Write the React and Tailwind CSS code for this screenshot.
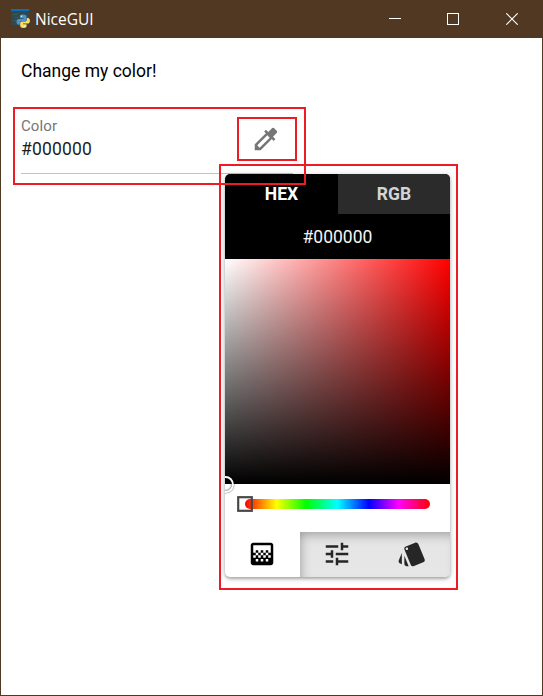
import React from "react";
import { MdColorize, MdGradient, MdTune, MdStyle } from "react-icons/md";

function AppIcon() {
  return (
    <svg className="block" width="20" height="20" viewBox="0 0 20 20">
      <rect x="0" y="0" width="18" height="16" fill="#304950" />
      <rect x="0" y="0" width="18" height="2" fill="#0b6ebd" />
      <path d="M2 5.5h5M4 8.5h3M2 11.5h3" stroke="#36684c" strokeWidth="0.8" />
      <path d="M11.8 5.5c-2.4 0-3 .9-3 2.2v1.5h3.6v.7H7.6c-1.3 0-2.1 1.1-2.1 2.9s.8 3 2.1 3h1.2v-1.7c0-1.2 1-2.1 2.2-2.1h2.7c1 0 1.8-.8 1.8-1.8V7.7c0-1.4-1.5-2.2-3.7-2.2z" fill="#4d93cb" />
      <path d="M12.6 19c2.4 0 3-.9 3-2.2v-1.5H12v-.7h4.8c1.3 0 2.1-1.1 2.1-2.9s-.8-2.8-2.1-2.8h-.9v1.5c0 1.2-1 2.1-2.2 2.1H11c-1 0-1.8.8-1.8 1.8v2.5c0 1.4 1.4 2.2 3.4 2.2z" fill="#ffdc63" />
      <circle cx="10.5" cy="7.2" r=".7" fill="#fff" />
      <circle cx="13.8" cy="17.3" r=".7" fill="#fff" />
    </svg>
  );
}

function TitleBar() {
  return (
    <header className="flex h-[38px] items-start bg-[#513823] text-white">
      <div className="pt-[9px] pl-[11px]"><AppIcon /></div>
      <span className="ml-[4px] pt-[9px] font-['Open_Sans',sans-serif] text-[15.5px] leading-[20px]">NiceGUI</span>
      <div className="mt-[13px] mr-[25px] ml-auto flex">
        <svg className="mr-[46px]" width="12" height="12"><path d="M0 5.5h12" stroke="white" /></svg>
        <svg className="mr-[47px]" width="12" height="12"><rect x=".5" y=".5" width="11" height="11" fill="none" stroke="white" /></svg>
        <svg width="12" height="12"><path d="M.3 .3l11.4 11.4M11.7 .3L.3 11.7" stroke="white" strokeWidth="1.1" /></svg>
      </div>
    </header>
  );
}

function ColorInput() {
  return (
    <div className="mt-[32px] ml-[20px] flex h-[59px] w-[272px] border-b border-[#c2c2c2]">
      <div className="flex grow flex-col">
        <span className="mt-[1px] text-[15px] leading-[20px] tracking-[0.1px] text-[#767676]">Color</span>
        <span className="mt-[1px] text-[17.5px] leading-[24px] tracking-[0.17px] text-[#1d1d1d]">#000000</span>
      </div>
      <MdColorize className="mt-[9px] mr-[12px] size-[30px] text-[#757575]" />
    </div>
  );
}

function ColorPicker() {
  return (
    <section className="absolute top-[174px] left-[225px] flex h-[403px] w-[225px] flex-col overflow-hidden rounded-[5px] bg-white shadow-[0_1px_6px_rgba(0,0,0,0.2),0_2px_3px_rgba(0,0,0,0.24)]">
      <div className="h-[85px] bg-black text-center text-[17.5px]">
        <div className="flex h-[40px] font-bold leading-[40px]">
          <div className="w-[113px] text-white">HEX</div>
          <div className="w-[112px] bg-[#2b2b2b] text-[#d4d4d4]">RGB</div>
        </div>
        <div className="pt-[1px] leading-[44px] text-[#f4f4f4]">#000000</div>
      </div>
      <div className="relative h-[225px] bg-[linear-gradient(to_top,#000,transparent),linear-gradient(to_right,#fff,#f00)]">
        <div className="absolute top-[219px] left-[-6px] size-[12.5px] rounded-full shadow-[0_0_0_1.9px_#fff,inset_0_0_1.25px_1.25px_rgba(0,0,0,0.3),0_0_1.25px_2.5px_rgba(0,0,0,0.4)]" />
      </div>
      <div className="h-[48px] px-[20px] pt-[15px]">
        <div className="relative h-[10px] rounded-full bg-[linear-gradient(90deg,#f00_0%,#ff0_17%,#0f0_33%,#0ff_50%,#00f_67%,#f0f_83%,#f00_100%)]">
          <svg className="absolute top-[-3px] left-[-8px]" width="16" height="16">
            <rect x="1.2" y="1.2" width="13.6" height="13.6" fill="none" stroke="#484848" strokeWidth="2.2" />
          </svg>
        </div>
      </div>
      <div className="flex h-[45px] text-[#262626]">
        <div className="flex w-[75px] justify-center pt-[7px] pr-px text-black"><MdGradient className="size-[30px]" /></div>
        <div className="flex w-[150px] bg-[#e6e6e6] shadow-[inset_4px_6px_12px_-4px_rgba(0,0,0,0.34)]">
          <div className="flex w-[75px] justify-center pt-[7px] pr-px"><MdTune className="size-[30px]" /></div>
          <div className="flex w-[75px] justify-center pt-[7px] pr-px"><MdStyle className="size-[30px]" /></div>
        </div>
      </div>
    </section>
  );
}

export default function App() {
  return (
    <main className="relative h-[696px] w-[543px] overflow-hidden bg-[#513823] font-['Roboto',sans-serif]">
      <TitleBar />
      <div className="ml-px h-[657px] w-[541px] bg-white pt-[21px]">
        <p className="ml-[20px] text-[17.5px] leading-[24px] text-black">Change my color!</p>
        <ColorInput />
      </div>
      <ColorPicker />
      <div className="absolute top-[107px] left-[13px] h-[78px] w-[293px] border-2 border-[#ed1c24]" />
      <div className="absolute top-[117px] left-[237px] h-[44px] w-[60px] border-2 border-[#ed1c24]" />
      <div className="absolute top-[164px] left-[219px] h-[426px] w-[239px] border-2 border-[#ed1c24]" />
    </main>
  );
}
